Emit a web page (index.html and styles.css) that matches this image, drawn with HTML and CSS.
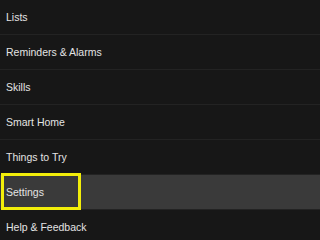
FILE: index.html
```html
<!DOCTYPE html>
<html>
<head>
<meta charset="utf-8">
<link rel="stylesheet" href="styles.css">
</head>
<body>
<ul class="menu">
  <li class="item">Lists</li>
  <li class="item">Reminders &amp; Alarms</li>
  <li class="item">Skills</li>
  <li class="item">Smart Home</li>
  <li class="item">Things to Try</li>
  <li class="item item-active">Settings<span class="highlight"></span></li>
  <li class="item">Help &amp; Feedback</li>
</ul>
</body>
</html>
```
FILE: styles.css
```css
html, body {
  margin: 0;
  padding: 0;
  background: #171717;
  overflow: hidden;
}
.menu {
  list-style: none;
  margin: 0;
  padding: 0;
  display: flex;
  flex-direction: column;
  width: 100%;
  font-family: "Liberation Sans", Arial, sans-serif;
  font-size: 10.5px;
  color: #e4e4e4;
}
.item {
  position: relative;
  height: 34px;
  display: flex;
  align-items: center;
  padding-left: 6px;
  border-bottom: 1px solid #232323;
}
.item-active {
  background: #3a3a3a;
}
.highlight {
  position: absolute;
  left: 1px;
  top: -2px;
  width: 80px;
  height: 37px;
  box-sizing: border-box;
  border: 3px solid #f2ee0a;
}
```
